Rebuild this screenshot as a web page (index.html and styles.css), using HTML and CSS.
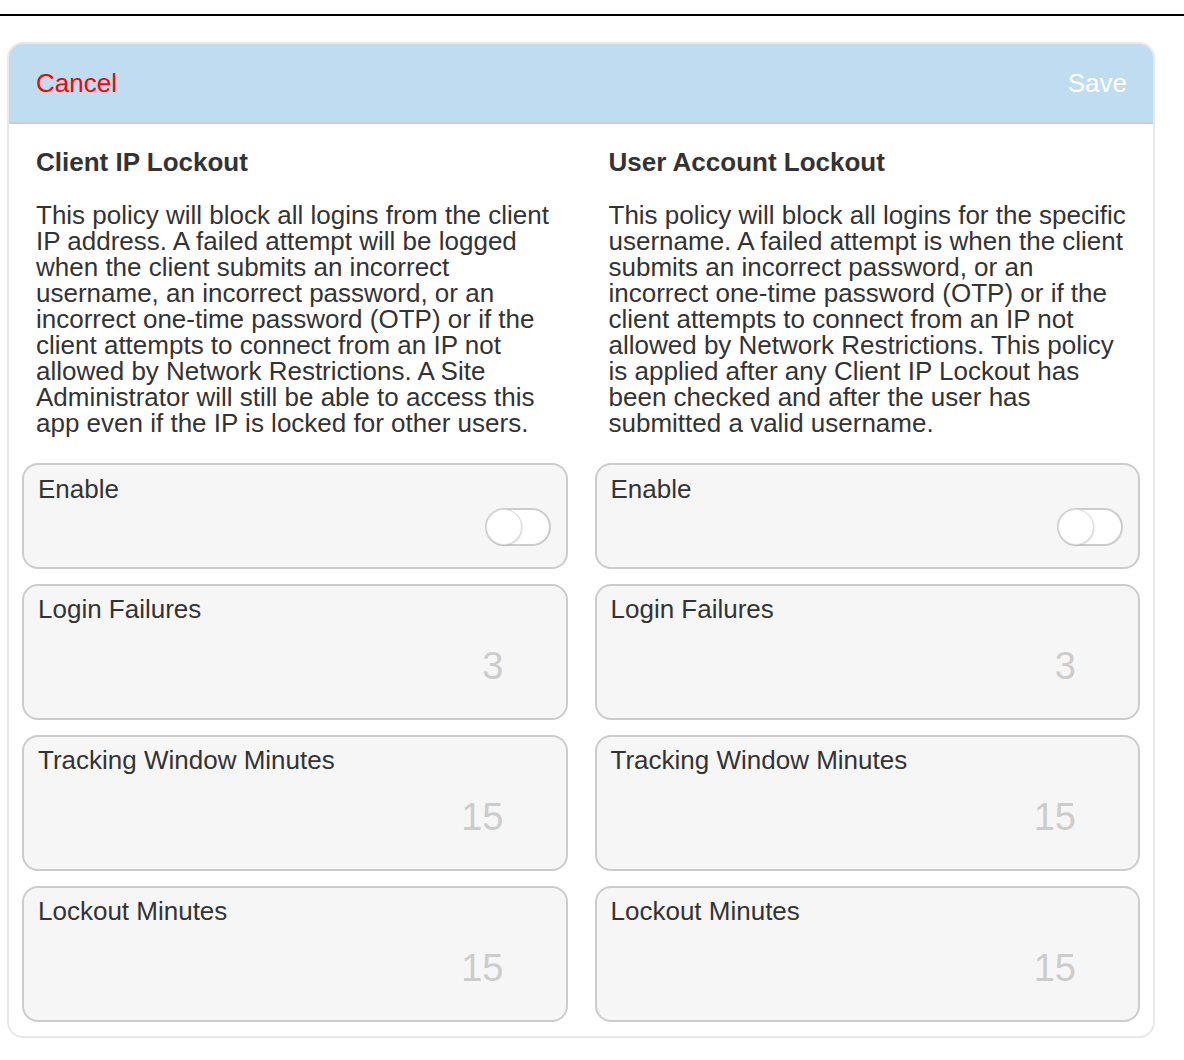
FILE: index.html
```html
<!DOCTYPE HTML>
<html>
    <head>
        <meta http-equiv="Content-Type" content="text/html; charset=UTF-8" />
        <title>Lockout Policy</title>
        <link rel="stylesheet" href="styles.css">
    </head>
    <body>
        <div class="topline"></div>
        <div class="card">
            <div class="header">
                <span class="cancel">Cancel</span>
                <span class="save">Save</span>
            </div>
            <div class="columns">
                <div class="column">
                    <div class="intro">
                        <div class="title">Client IP Lockout</div>
                        <div class="desc">This policy will block all logins from the client IP address. A failed attempt will be logged when the client submits an incorrect username, an incorrect password, or an incorrect one-time password (OTP) or if the client attempts to connect from an IP not allowed by Network Restrictions. A Site Administrator will still be able to access this app even if the IP is locked for other users.</div>
                    </div>
                    <div class="field field-toggle">
                        <div class="label">Enable</div>
                        <div class="toggle"><div class="knob"></div></div>
                    </div>
                    <div class="field">
                        <div class="label">Login Failures</div>
                        <div class="value">3</div>
                    </div>
                    <div class="field">
                        <div class="label">Tracking Window Minutes</div>
                        <div class="value">15</div>
                    </div>
                    <div class="field">
                        <div class="label">Lockout Minutes</div>
                        <div class="value">15</div>
                    </div>
                </div>
                <div class="column">
                    <div class="intro">
                        <div class="title">User Account Lockout</div>
                        <div class="desc">This policy will block all logins for the specific username. A failed attempt is when the client submits an incorrect password, or an incorrect one-time password (OTP) or if the client attempts to connect from an IP not allowed by Network Restrictions. This policy is applied after any Client IP Lockout has been checked and after the user has submitted a valid username.</div>
                    </div>
                    <div class="field field-toggle">
                        <div class="label">Enable</div>
                        <div class="toggle"><div class="knob"></div></div>
                    </div>
                    <div class="field">
                        <div class="label">Login Failures</div>
                        <div class="value">3</div>
                    </div>
                    <div class="field">
                        <div class="label">Tracking Window Minutes</div>
                        <div class="value">15</div>
                    </div>
                    <div class="field">
                        <div class="label">Lockout Minutes</div>
                        <div class="value">15</div>
                    </div>
                </div>
            </div>
        </div>
    </body>
</html>
```

FILE: styles.css
```css
body {
    margin: 0;
    font-family: "Liberation Sans", Arial, sans-serif;
    font-size: 26px;
    color: #333;
    background: #fff;
}

.topline {
    margin-top: 14px;
    height: 2px;
    background: #000;
}

.card {
    margin: 26px 0 0 7px;
    width: 1144px;
    border: 2px solid #e8e8e8;
    border-radius: 16px;
    overflow: hidden;
}

.header {
    display: flex;
    justify-content: space-between;
    align-items: center;
    height: 78px;
    padding: 0 26px 0 27px;
    background: #c0dcf0;
    border-bottom: 2px solid #ccc;
    line-height: 30px;
}

.cancel {
    color: #ff0000;
}

.save {
    color: #fff;
}

.columns {
    display: grid;
    grid-template-columns: 1fr 1fr;
    column-gap: 27px;
    padding: 23px 13px 14px 13px;
}

.intro {
    padding: 0 10px 0 14px;
    margin-bottom: 27px;
}

.title {
    font-weight: bold;
    line-height: 30px;
}

.desc {
    margin-top: 25px;
    line-height: 26px;
}

.field {
    background: #f6f6f6;
    border: 2px solid #ccc;
    border-radius: 16px;
    padding: 8px 13px 32px 14px;
    margin-bottom: 15px;
}

.field:last-child {
    margin-bottom: 0;
}

.label {
    line-height: 30px;
}

.value {
    margin-top: 22px;
    padding-right: 49px;
    text-align: right;
    font-size: 38px;
    line-height: 40px;
    color: #ccc;
}

.field-toggle {
    display: flex;
    flex-direction: column;
    padding: 9px 15px 21px 14px;
}

.toggle {
    align-self: flex-end;
    margin-top: 4px;
    width: 62px;
    height: 34px;
    border: 2px solid #ccc;
    border-radius: 19px;
    background: #fff;
}

.knob {
    width: 34px;
    height: 34px;
    border-radius: 50%;
    background: #fff;
    box-shadow: 0 0 0 1px #ddd, 1px 1px 2px rgba(0,0,0,0.25);
}
```
